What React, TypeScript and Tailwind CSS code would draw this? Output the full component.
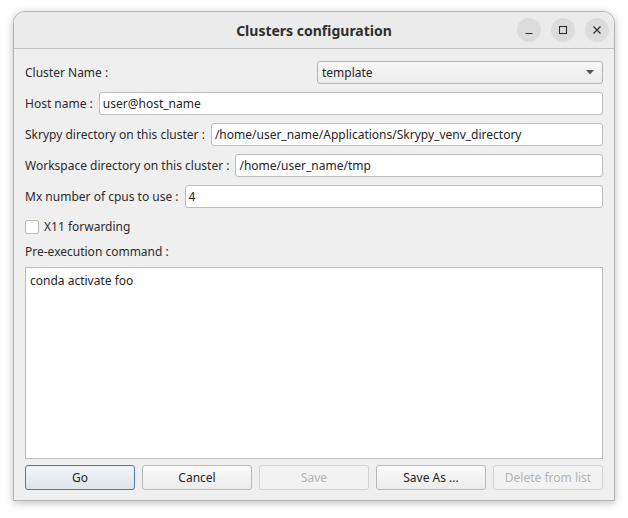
import React from "react";

const font = { fontFamily: '"Noto Sans", "DejaVu Sans", sans-serif' };

function Input({ value, width }: { value: string; width?: string }) {
  return (
    <div
      className={`h-[23px] ${width ?? "flex-1"} bg-white border border-[#bcbcbc] rounded-[3px] flex items-center pl-[3px] text-[12px] text-[#252525]`}
    >
      {value}
    </div>
  );
}

function Row({ label, value }: { label: string; value: string }) {
  return (
    <div className="flex items-center h-[23px] mb-[8px]">
      <span className="text-[12px] text-[#2b2b2b] mr-[6px] whitespace-nowrap">{label}</span>
      <Input value={value} />
    </div>
  );
}

function Btn({
  children,
  disabled,
  primary,
}: {
  children: React.ReactNode;
  disabled?: boolean;
  primary?: boolean;
}) {
  const cls = primary
    ? "border-[#4a7aa8] bg-gradient-to-b from-[#f2f5f8] to-[#dfe5ea] text-[#1e1e1e]"
    : disabled
    ? "border-[#d3d3d3] bg-[#f2f2f2] text-[#b4b4b4]"
    : "border-[#b9b9b9] bg-gradient-to-b from-[#fafafa] to-[#ececec] text-[#1e1e1e]";
  return (
    <div
      className={`flex-1 h-[25px] border rounded-[3px] flex items-center justify-center text-[12px] ${cls}`}
    >
      {children}
    </div>
  );
}

export default function App() {
  return (
    <div className="w-[628px] h-[518px] bg-white pt-[11px] pl-[13px]" style={font}>
      <div className="w-[602px] h-[490px] rounded-t-[12px] border border-[#b4b4b4] bg-[#efefef] shadow-[0_2px_8px_rgba(0,0,0,0.25)] flex flex-col overflow-hidden">
        <div className="h-[37px] shrink-0 bg-[#ebebeb] border-b border-[#c2c2c2] relative flex items-center justify-center">
          <span className="text-[14px] font-bold text-[#2e2e2e]">
            Clusters configuration
          </span>
          <div className="absolute right-[5px] top-[6px] flex gap-[10px]">
            <div className="w-[24px] h-[24px] rounded-full bg-[#dcdcdc] flex items-center justify-center">
              <svg width="10" height="10" viewBox="0 0 10 10">
                <line x1="1.5" y1="8.5" x2="8.5" y2="8.5" stroke="#2e2e2e" strokeWidth="1.2" />
              </svg>
            </div>
            <div className="w-[24px] h-[24px] rounded-full bg-[#dcdcdc] flex items-center justify-center">
              <svg width="10" height="10" viewBox="0 0 10 10">
                <rect x="1.5" y="1.5" width="7" height="7" fill="none" stroke="#2e2e2e" strokeWidth="1.1" />
              </svg>
            </div>
            <div className="w-[24px] h-[24px] rounded-full bg-[#dcdcdc] flex items-center justify-center">
              <svg width="10" height="10" viewBox="0 0 10 10">
                <path d="M1.5 1.5 L8.5 8.5 M8.5 1.5 L1.5 8.5" stroke="#2e2e2e" strokeWidth="1.2" />
              </svg>
            </div>
          </div>
        </div>

        <div className="flex flex-col px-[11px] pt-[12px]">
          <div className="flex items-center h-[23px] mb-[8px]">
            <span className="flex-1 text-[12px] text-[#2b2b2b]">Cluster Name :</span>
            <div className="w-[286px] h-[23px] border border-[#b4b4b4] rounded-[3px] bg-gradient-to-b from-[#f8f8f8] to-[#ebebeb] flex items-center pl-[4px] pr-[8px] text-[12px] text-[#252525]">
              <span className="flex-1">template</span>
              <svg width="8" height="5" viewBox="0 0 8 5">
                <path d="M0 0 L8 0 L4 4.5 Z" fill="#555" />
              </svg>
            </div>
          </div>
          <Row label="Host name :" value="user@host_name" />
          <Row label="Skrypy directory on this cluster :" value="/home/user_name/Applications/Skrypy_venv_directory" />
          <Row label="Workspace directory on this cluster :" value="/home/user_name/tmp" />
          <Row label="Mx number of cpus to use :" value="4" />

          <div className="flex items-center h-[19px] mt-[1px]">
            <div className="w-[14px] h-[14px] bg-white border border-[#bcbcbc] rounded-[2px]" />
            <span className="ml-[5px] text-[12px] text-[#2b2b2b]">X11 forwarding</span>
          </div>
          <div className="h-[18px] mt-[7px] flex items-center text-[12px] text-[#2b2b2b]">
            Pre-execution command :
          </div>
          <div className="mt-[6px] h-[192px] bg-white border border-[#bcbcbc] px-[4px] pt-[4px] text-[12px] text-[#252525]">
            conda activate foo
          </div>
          <div className="flex gap-[7px] mt-[6px]">
            <Btn primary>Go</Btn>
            <Btn>Cancel</Btn>
            <Btn disabled>Save</Btn>
            <Btn>Save As ...</Btn>
            <Btn disabled>Delete from list</Btn>
          </div>
        </div>
      </div>
    </div>
  );
}
